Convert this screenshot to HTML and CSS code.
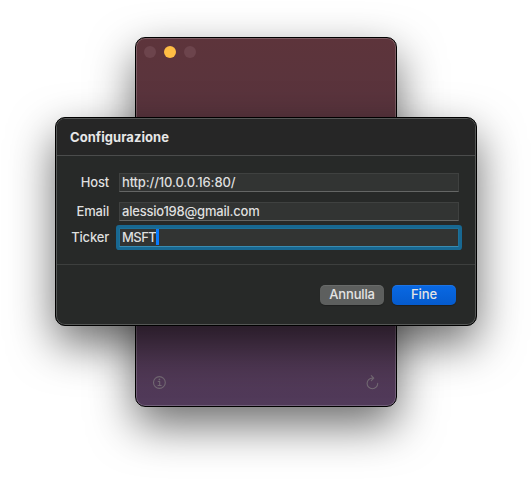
FILE: index.html
```html
<!DOCTYPE html>
<html lang="it">
<head>
<meta charset="utf-8">
<title>Configurazione</title>
<link rel="stylesheet" href="styles.css">
</head>
<body>
<main class="stage">
  <section class="window">
    <header class="lights">
      <span class="light"></span>
      <span class="light light-minimize"></span>
      <span class="light"></span>
    </header>
    <footer class="toolbar">
      <svg class="icon" width="15" height="15" viewBox="0 0 15 15">
        <circle cx="7.4" cy="7.5" r="5.9"/>
        <path d="M6.2 6.5h1.5v3.9M6 10.5h3.2"/>
        <circle class="dot" cx="7.4" cy="4.4" r=".85"/>
      </svg>
      <svg class="icon" width="15" height="17" viewBox="0 0 15 17">
        <path d="M8.4 4.1H7.4A5.3 5.3 0 1 0 12.7 9.4M6.3 1.7L8.8 4.2L6.3 6.7"/>
      </svg>
    </footer>
  </section>
  <section class="dialog">
    <h1 class="title">Configurazione</h1>
    <form class="form">
      <span class="label">Host</span>
      <div class="field"><span class="host">http://10.0.0.16:80/</span></div>
      <span class="label">Email</span>
      <div class="field"><span class="email">alessio198@gmail.com</span></div>
      <span class="label">Ticker</span>
      <div class="field focused"><span class="ticker">MSFT</span><i class="caret"></i></div>
    </form>
    <footer class="actions">
      <button class="button">Annulla</button>
      <button class="button primary">Fine</button>
    </footer>
  </section>
</main>
</body>
</html>
```
FILE: styles.css
```css
* { box-sizing: border-box; }
body {
  margin: 0;
  background: #fff;
  font: 500 13px/16px Inter, "Liberation Sans", sans-serif;
  letter-spacing: -.12px;
  color: #dfdfdf;
}
.stage {
  display: grid;
  width: 532px;
  height: 480px;
  overflow: hidden;
}
.window, .dialog {
  grid-area: 1 / 1;
  display: flex;
  flex-direction: column;
  border: 1px solid #000;
  border-radius: 10px;
}
.window {
  width: 262px;
  height: 370px;
  margin: 37px 0 0 135px;
  justify-content: space-between;
  background: linear-gradient(#5d343b, #56343f 35%, #50374f 75%, #513a5a);
  box-shadow: inset 0 0 0 1px rgba(255,255,255,.2), 0 18px 45px rgba(0,0,0,.58);
}
.lights {
  display: flex;
  gap: 8px;
  padding: 8px;
}
.light {
  width: 12px;
  height: 12px;
  border-radius: 50%;
  background: #6c444c;
}
.light-minimize { background: #ffbd44; }
.toolbar {
  display: flex;
  justify-content: space-between;
  align-items: center;
  padding: 0 16px 15px;
}
.icon {
  fill: none;
  stroke: #746a74;
  stroke-width: 1.1;
  stroke-linecap: round;
  stroke-linejoin: round;
}
.dot { fill: #746a74; stroke: none; }
.dialog {
  width: 422px;
  height: 209px;
  margin: 117px 0 0 55px;
  background: #272928;
  box-shadow: inset 0 0 0 1px #555756, 0 18px 45px rgba(0,0,0,.58);
}
.title {
  height: 37px;
  margin: 1px 1px 0;
  padding: 10px 13px 0;
  border-bottom: 1px solid #4b4c4c;
  border-radius: 8px 8px 0 0;
  background: #262626;
  font-size: 13px;
  line-height: 16px;
  font-weight: 700;
  letter-spacing: .05px;
  color: #e7e7e7;
}
.form {
  display: grid;
  grid-template-columns: 52px 340px;
  grid-template-rows: 29px 26px 19px;
  column-gap: 10px;
  height: 109px;
  margin: 0 1px;
  padding: 17px 0 0;
  border-bottom: 1px solid #3d3f3e;
}
.label { text-align: right; padding-top: 1px; letter-spacing: -.18px; }
.field {
  display: flex;
  align-items: flex-start;
  width: 340px;
  height: 19px;
  padding: 0 2px;
  background: #323433;
  border: 1px solid #3f4140;
  border-bottom-color: #646665;
}
.host { letter-spacing: -.15px; }
.email { letter-spacing: -.22px; }
.ticker { letter-spacing: -.55px; }
.focused {
  border-color: #1d7199;
  border-bottom-color: #398cb2;
  border-radius: 1px;
  box-shadow: 0 0 0 3px #186892;
}
.caret { width: 3px; height: 16px; background: #087bff; }
.actions {
  display: flex;
  justify-content: flex-end;
  gap: 8px;
  padding: 20px 20px 0;
}
.button {
  width: 64px;
  height: 20px;
  padding: 0 0 2px;
  border: 0;
  border-radius: 5px;
  background: #5d5f5e;
  box-shadow: inset 0 1px 0 rgba(255,255,255,.08), 0 1px 1px rgba(0,0,0,.25);
  color: #e4e4e4;
  font: inherit;
  letter-spacing: -.15px;
}
.primary { background: linear-gradient(#0969e4, #055bce); }
```
